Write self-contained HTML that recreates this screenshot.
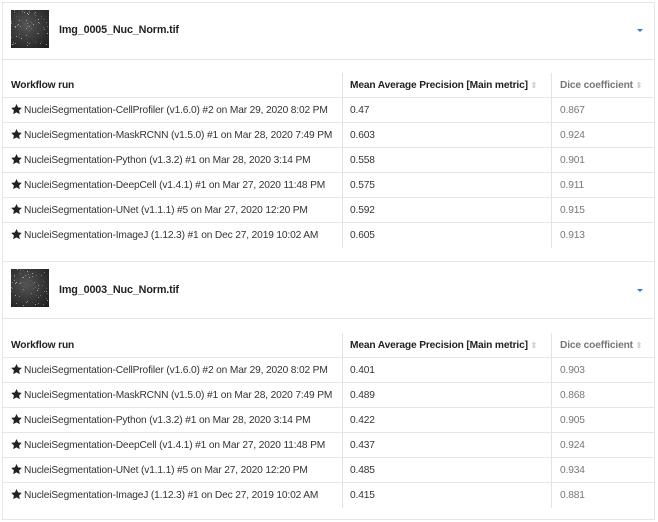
<!DOCTYPE html>
<html><head><meta charset="utf-8"><style>
*{margin:0;padding:0;box-sizing:border-box}
body{width:658px;height:522px;background:#fff;font-family:"Liberation Sans",sans-serif;font-size:10.2px;color:#333;position:relative;overflow:hidden;letter-spacing:-0.15px}
.frame{position:absolute;left:2px;top:2px;width:653px;height:518px;border:1px solid #e6e6e6}
.hl{position:absolute;left:2px;width:653px;height:1px;background:#e6e6e6}
.vl{position:absolute;width:1px;background:#e3e3e3}
.thumb{position:absolute;left:11px;width:38px;height:38px;background:radial-gradient(circle at 40% 40%,#555,#2c2c2c 70%,#1c1c1c);overflow:hidden}
.thumb i{position:absolute;width:1px;height:1px;background:#ccc}
.title{position:absolute;left:59px;font-weight:bold;font-size:10.8px;color:#222}
.caret{position:absolute;left:637px;width:0;height:0;border-left:3px solid transparent;border-right:3px solid transparent;border-top:3px solid #3a6fd8}
.t{position:absolute;white-space:nowrap;line-height:14px}
.h{font-weight:bold;color:#222}
.g{color:#777}
.star{display:inline-block;width:11px;vertical-align:-1px;margin-right:2px}
.sort{color:#ccc;font-size:8px}
</style></head><body>
<div class="frame"></div>
<div id="c"></div>
<script>
const s1={top:2,img:10,title:24,line:59,hdr:73,data:[
["NucleiSegmentation-CellProfiler (v1.6.0) #2 on Mar 29, 2020 8:02 PM","0.47","0.867"],
["NucleiSegmentation-MaskRCNN (v1.5.0) #1 on Mar 28, 2020 7:49 PM","0.603","0.924"],
["NucleiSegmentation-Python (v1.3.2) #1 on Mar 28, 2020 3:14 PM","0.558","0.901"],
["NucleiSegmentation-DeepCell (v1.4.1) #1 on Mar 27, 2020 11:48 PM","0.575","0.911"],
["NucleiSegmentation-UNet (v1.1.1) #5 on Mar 27, 2020 12:20 PM","0.592","0.915"],
["NucleiSegmentation-ImageJ (1.12.3) #1 on Dec 27, 2019 10:02 AM","0.605","0.913"]],name:"Img_0005_Nuc_Norm.tif"};
const s2={top:261,img:269,title:284,line:318,hdr:333,data:[
["NucleiSegmentation-CellProfiler (v1.6.0) #2 on Mar 29, 2020 8:02 PM","0.401","0.903"],
["NucleiSegmentation-MaskRCNN (v1.5.0) #1 on Mar 28, 2020 7:49 PM","0.489","0.868"],
["NucleiSegmentation-Python (v1.3.2) #1 on Mar 28, 2020 3:14 PM","0.422","0.905"],
["NucleiSegmentation-DeepCell (v1.4.1) #1 on Mar 27, 2020 11:48 PM","0.437","0.924"],
["NucleiSegmentation-UNet (v1.1.1) #5 on Mar 27, 2020 12:20 PM","0.485","0.934"],
["NucleiSegmentation-ImageJ (1.12.3) #1 on Dec 27, 2019 10:02 AM","0.415","0.881"]],name:"Img_0003_Nuc_Norm.tif"};
const star='<svg class="star" width="11" height="10" viewBox="0 0 24 22"><path d="M12 0l3.5 7.5 8.2 1-6 5.7 1.6 8.1L12 18.3 4.7 22.3l1.6-8.1-6-5.7 8.2-1z" fill="#222"/></svg>';
let h='';let seed=7;const r=()=>{seed=(seed*9301+49297)%233280;return seed/233280};
for(const s of [s1,s2]){
 if(s.top>2)h+=`<div class="hl" style="top:${s.top}px"></div>`;
 let dots='';for(let i=0;i<60;i++)dots+=`<i style="left:${(r()*37)|0}px;top:${(r()*37)|0}px;opacity:${(0.2+r()*0.6).toFixed(2)}"></i>`;
 h+=`<div class="thumb" style="top:${s.img}px">${dots}</div>`;
 h+=`<div class="title" style="top:${s.title}px">${s.name}</div>`;
 h+=`<div class="caret" style="top:${s.title+5}px"></div>`;
 h+=`<div class="hl" style="top:${s.line}px"></div>`;
 const hc=s.hdr+13;
 h+=`<div class="vl" style="left:342px;top:${s.hdr}px;height:175px"></div><div class="vl" style="left:551px;top:${s.hdr}px;height:175px"></div>`;
 h+=`<div class="t h" style="left:11px;top:${hc-7}px">Workflow run</div>`;
 h+=`<div class="t h" style="left:350px;top:${hc-7}px">Mean Average Precision [Main metric] <span class="sort">&#8661;</span></div>`;
 h+=`<div class="t h g" style="left:560px;top:${hc-7}px">Dice coefficient <span class="sort">&#8661;</span></div>`;
 s.data.forEach((d,i)=>{const y=s.hdr+24+i*25;
  h+=`<div class="hl" style="top:${y}px"></div>`;
  const cy=y+14-7;
  h+=`<div class="t" style="left:11px;top:${cy}px">${star}${d[0]}</div><div class="t" style="left:350px;top:${cy}px">${d[1]}</div><div class="t g" style="left:560px;top:${cy}px">${d[2]}</div>`;});
}
document.getElementById('c').innerHTML=h;
</script>
</body></html>
